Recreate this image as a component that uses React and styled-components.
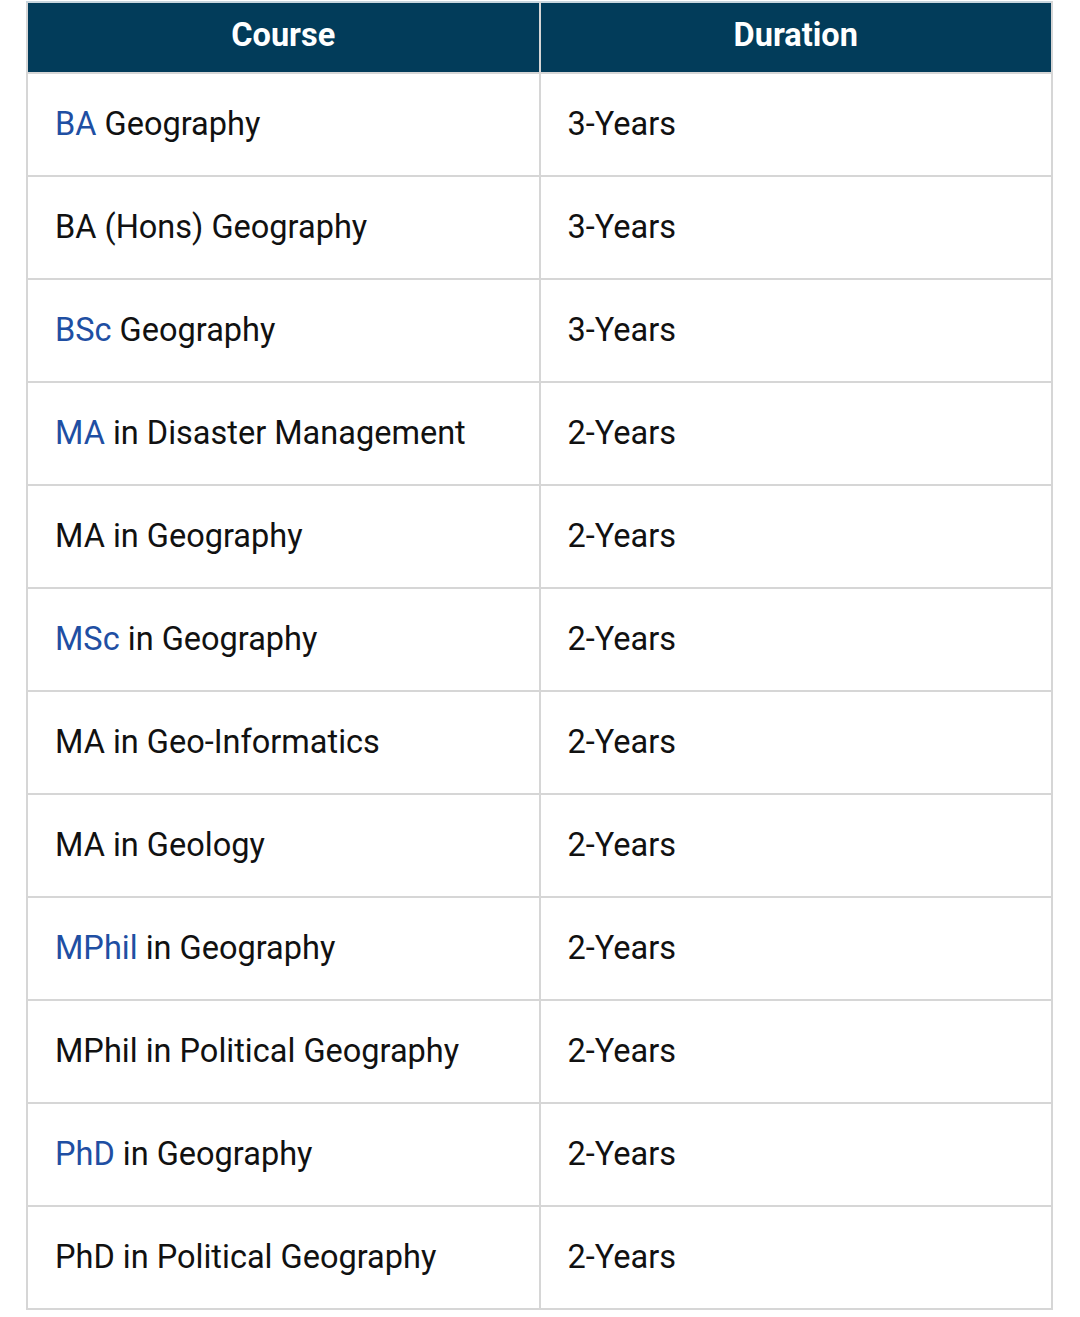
import React from 'react';
import styled, { createGlobalStyle } from 'styled-components';

const GlobalStyle = createGlobalStyle`
  html, body {
    margin: 0;
    padding: 0;
    background: #ffffff;
  }
  body {
    font-family: Roboto, "Liberation Sans", Arial, sans-serif;
  }
`;

const Page = styled.div`
  padding: 1px 27px 8px 26px;
`;

const Table = styled.table`
  width: 100%;
  border-collapse: collapse;
  border: 2px solid #d6d6d6;
  table-layout: fixed;
`;

const HeadCell = styled.th`
  background: #023c5a;
  color: #ffffff;
  font-weight: 700;
  font-size: 32.5px;
  height: 63px;
  padding: 0 0 6px;
  text-align: center;
  border: 2px solid #d6d6d6;
  border-top-color: #c9d6de;
`;

const Cell = styled.td`
  font-size: 32.5px;
  color: #111111;
  height: 100px;
  padding: 0 20px 1px 27px;
  border: 2px solid #d6d6d6;
  vertical-align: middle;
`;

const Link = styled.a`
  color: #1f4fa3;
  text-decoration: none;
`;

const courses = [
  { link: 'BA', rest: ' Geography', duration: '3-Years' },
  { text: 'BA (Hons) Geography', duration: '3-Years' },
  { link: 'BSc', rest: ' Geography', duration: '3-Years' },
  { link: 'MA', rest: ' in Disaster Management', duration: '2-Years' },
  { text: 'MA in Geography', duration: '2-Years' },
  { link: 'MSc', rest: ' in Geography', duration: '2-Years' },
  { text: 'MA in Geo-Informatics', duration: '2-Years' },
  { text: 'MA in Geology', duration: '2-Years' },
  { link: 'MPhil', rest: ' in Geography', duration: '2-Years' },
  { text: 'MPhil in Political Geography', duration: '2-Years' },
  { link: 'PhD', rest: ' in Geography', duration: '2-Years' },
  { text: 'PhD in Political Geography', duration: '2-Years' },
];

export default function App() {
  return (
    <Page>
      <GlobalStyle />
      <Table>
        <thead>
          <tr>
            <HeadCell>Course</HeadCell>
            <HeadCell>Duration</HeadCell>
          </tr>
        </thead>
        <tbody>
          {courses.map((c, i) => (
            <tr key={i}>
              <Cell>
                {c.link ? (
                  <>
                    <Link href="#">{c.link}</Link>
                    {c.rest}
                  </>
                ) : (
                  c.text
                )}
              </Cell>
              <Cell>{c.duration}</Cell>
            </tr>
          ))}
        </tbody>
      </Table>
    </Page>
  );
}
